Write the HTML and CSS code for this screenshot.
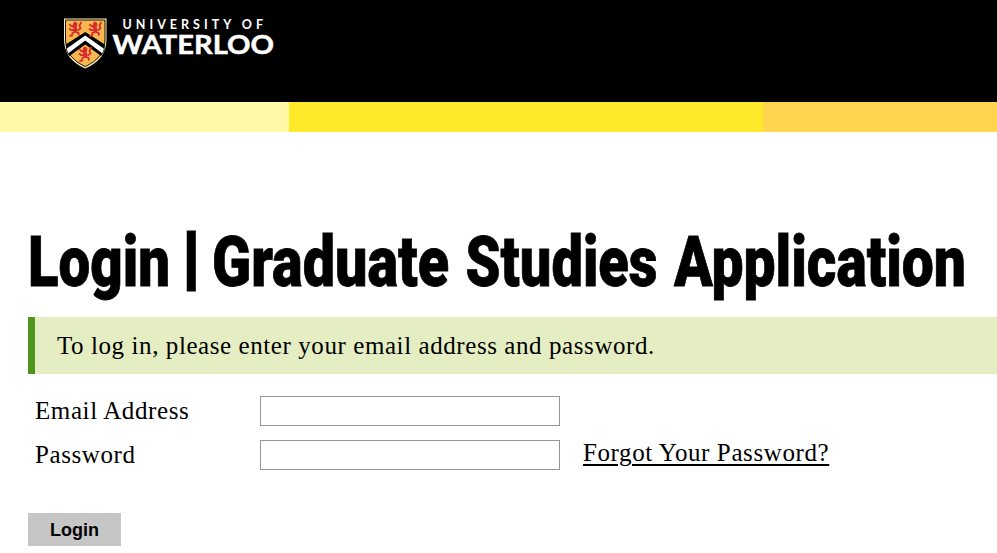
FILE: index.html
```html
<!doctype html>
<html lang="en">
<head>
<meta charset="utf-8">
<title>Login | Graduate Studies Application</title>
<link rel="stylesheet" href="styles.css">
</head>

<body>
	<header class="header">
		<a class="logo" href="#" aria-label="University of Waterloo">
			<svg width="220" height="65" viewBox="62 10 220 65">
				<path d="M64 18.500h42.500V39c0 15-8 23.500-21.250 29.500C72 62.500 64 54 64 39z" fill="#fff3b4"/>
				<path d="M65.500 20h39.500v19c0 14-7.500 21.700-19.750 27.600C73 60.700 65.500 53 65.500 39z" fill="#f9b84f" stroke="#111" stroke-width="1"/>
				<path d="M66 49.500v-5.300L85.250 32 104.500 44.200v5.300c-1 3-2.500 5-3.500 6.500L85.250 44.500 69.500 56c-1.500-1.800-2.800-4-3.500-6.500z" fill="#000"/>
				<path d="M66.500 48.800 85.250 35.500 104 48.800l-1.800 4.400L85.250 40.500 68.300 53.200z" fill="#fff"/>
				<g id="lion" fill="none" stroke="#d92b2f" stroke-width="1.800">
					<path d="M74 21.500l3 1 .5 2.500-1 2 1 3-1 2.500-3-.5.500-3-2-2 1-3z" fill="#d92b2f" stroke="none"/>
					<path d="M74.500 26.500l-3.500-.5-1.500-2M75 30l-4 .2-2-1.700M76 31.500l-3.500 1.500-.5 2.500-2.500.500M76 32l2.500 1 .5 2.500M77.500 30.500l3-2-1-3 1.800-3.500"/>
				</g>
				<use href="#lion" x="20"/>
				<use href="#lion" x="10" y="25"/>
				<text class="logo-top" x="122.500" y="28.800" textLength="140.500">UNIVERSITY OF</text>
				<text class="logo-name" x="112.500" y="53.600" textLength="161.500" lengthAdjust="spacingAndGlyphs">WATERLOO</text>
			</svg>
		</a>
	</header>
	<div class="bands">
		<span class="band-light"></span>
		<span class="band-yellow"></span>
		<span class="band-gold"></span>
	</div>

	<div class="content">
		<h1 class="title">
			<svg width="969" height="92" viewBox="28 215 969 92">
				<text y="285.500" lengthAdjust="spacingAndGlyphs" x="28" textLength="142">Login</text>
				<text class="bar" y="281" x="182.500">|</text>
				<text y="285.500" lengthAdjust="spacingAndGlyphs" x="212" textLength="237">Graduate</text>
				<text y="285.500" lengthAdjust="spacingAndGlyphs" x="465.500" textLength="192">Studies</text>
				<text y="285.500" lengthAdjust="spacingAndGlyphs" x="674" textLength="292">Application</text>
			</svg>
		</h1>
		<div class="alert">To log in, please enter your email address and password.</div>
		<form class="form">
			<div class="row">
				<label class="label-email" for="email">Email Address</label>
				<input type="text" id="email">
			</div>
			<div class="row">
				<label class="label-pass" for="password">Password</label>
				<input type="password" id="password">
				<a class="forgot" href="#">Forgot Your Password?</a>
			</div>
			<button type="button" class="btn">Login</button>
		</form>
	</div>
</body>
</html>
```

FILE: styles.css
```css
* { margin:0; padding:0; box-sizing:border-box; }
body { overflow:hidden; background:#fff; color:#000; font-family:Georgia, "Liberation Serif", serif; font-size:25px; }
.header { height:102px; padding:10px 0 0 62px; background:#000; }
.logo { display:block; width:220px; height:65px; }
.logo svg { display:block; }
.logo text { fill:#fff; font-family:Lato, sans-serif; font-weight:700; }
.logo .logo-top { font-size:12.500px; }
.logo .logo-name { font-size:26.500px; stroke:#fff; stroke-width:.5px; }

.bands { display:flex; height:30px; }
.band-light { width:289px; background:#fff8a7; }
.band-yellow { width:474px; background:#ffe92b; }
.band-gold { flex:1; background:#ffd44f; }

.content { padding:83px 0 0 28px; }
.title { height:102px; }
.title svg { display:block; }
.title text { font-family:Roboto, sans-serif; font-size:71px; font-weight:900; stroke:#000; stroke-width:.8px; }
.title .bar { font-size:68px; stroke-width:3px; }
.alert { height:57px; padding-left:22px; border-left:7px solid #4f941c; background:#e4eec2; line-height:57px; letter-spacing:.58px; }

.form { padding:22px 0 0 7px; }
.row { display:flex; height:30px; margin-bottom:14px; line-height:30px; }
.row label { width:225px; letter-spacing:.6px; }
.row input { width:300px; height:30px; padding:0 6px; border:1px solid #959595; background:#fff; font:20px "Liberation Sans", sans-serif; }
.forgot { height:25px; margin-left:23px; color:#000; line-height:25px; letter-spacing:.6px; text-decoration-thickness:2px; text-underline-offset:3px; }
.btn { display:block; width:93px; height:33px; margin:43px 0 0 -7px; padding-top:2px; border:0; background:#c6c6c6; color:#000; font:bold 18px "Liberation Sans", sans-serif; }
```
